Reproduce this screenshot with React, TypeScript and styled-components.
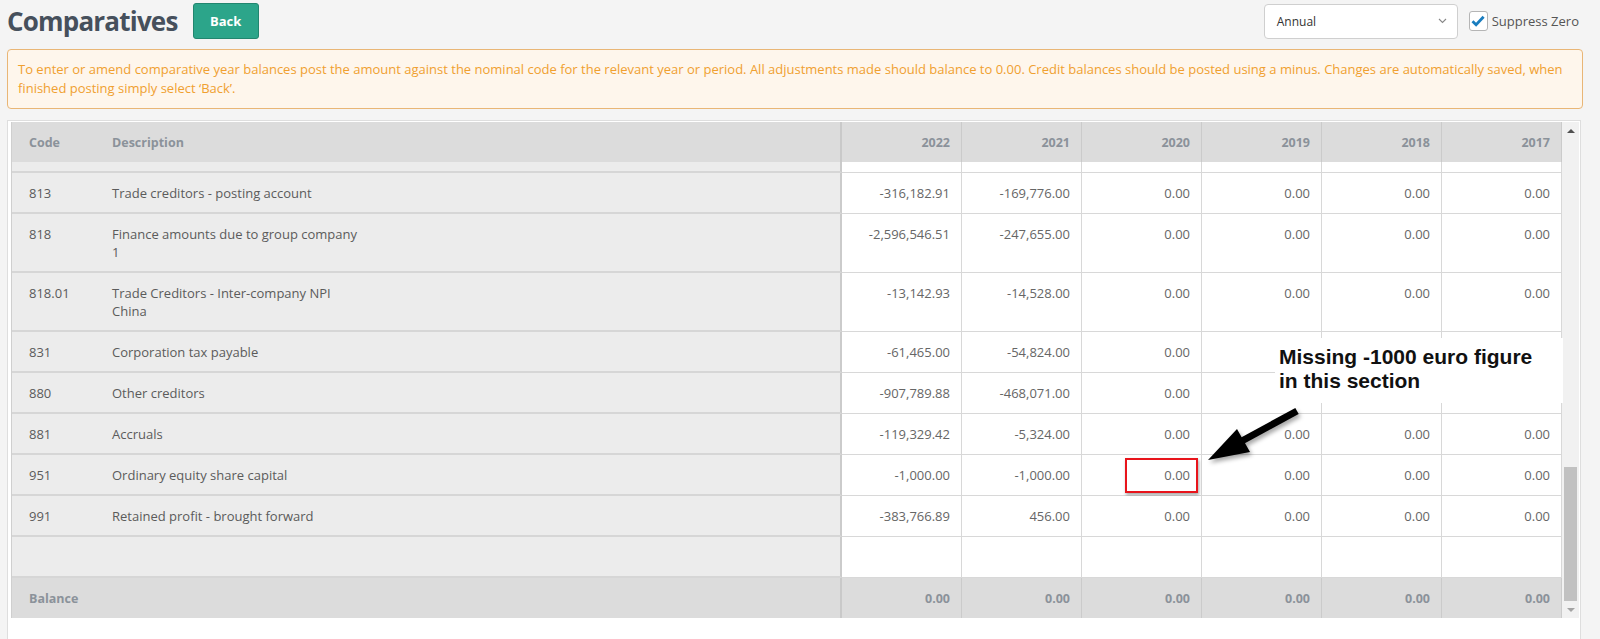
import styled, { createGlobalStyle } from "styled-components";

const GlobalStyle = createGlobalStyle`
    body {
        margin: 0;
        background: #f4f4f4;
        font-family: "Open Sans", "Noto Sans", sans-serif;
    }
`;

interface Line {
    code: string;
    description: string;
    values: string[];
}

const YEARS = ["2022", "2021", "2020", "2019", "2018", "2017"];

// cells under the annotation box are left blank: they are covered in the screenshot
const ROWS: Line[] = [
    { code: "813", description: "Trade creditors - posting account", values: ["-316,182.91", "-169,776.00", "0.00", "0.00", "0.00", "0.00"] },
    { code: "818", description: "Finance amounts due to group company 1", values: ["-2,596,546.51", "-247,655.00", "0.00", "0.00", "0.00", "0.00"] },
    { code: "818.01", description: "Trade Creditors - Inter-company NPI China", values: ["-13,142.93", "-14,528.00", "0.00", "0.00", "0.00", "0.00"] },
    { code: "831", description: "Corporation tax payable", values: ["-61,465.00", "-54,824.00", "0.00", "", "", ""] },
    { code: "880", description: "Other creditors", values: ["-907,789.88", "-468,071.00", "0.00", "", "", ""] },
    { code: "881", description: "Accruals", values: ["-119,329.42", "-5,324.00", "0.00", "0.00", "0.00", "0.00"] },
    { code: "951", description: "Ordinary equity share capital", values: ["-1,000.00", "-1,000.00", "0.00", "0.00", "0.00", "0.00"] },
    { code: "991", description: "Retained profit - brought forward", values: ["-383,766.89", "456.00", "0.00", "0.00", "0.00", "0.00"] },
];

const Page = styled.div`
    padding: 3px 17px 0 7px;
`;

const TopBar = styled.div`
    display: flex;
    justify-content: space-between;
    align-items: center;
    height: 36px;
`;

const TitleGroup = styled.div`
    display: flex;
    align-items: center;
`;

const Title = styled.h1`
    margin: 0;
    font-size: 26px;
    line-height: 36px;
    font-weight: 700;
    letter-spacing: -0.8px;
    color: #46505c;
`;

const BackButton = styled.button`
    margin-left: 15px;
    width: 66px;
    height: 36px;
    background: #2ca58a;
    border: 1px solid #22866f;
    border-radius: 3px;
    color: #fff;
    font-family: "Open Sans", sans-serif;
    font-weight: 700;
    font-size: 13px;
`;

const Controls = styled.div`
    display: flex;
    align-items: center;
    margin-right: 4px;
`;

const Select = styled.div`
    width: 194px;
    height: 35px;
    box-sizing: border-box;
    background: #fff;
    border: 1px solid #cfcfcf;
    border-radius: 4px;
    padding: 0 10px 0 12px;
    display: flex;
    align-items: center;
    justify-content: space-between;
    font-size: 12px;
    color: #333;
`;

const CheckLabel = styled.label`
    display: flex;
    align-items: center;
    margin-left: 11px;
    font-size: 13px;
    color: #555;
`;

const CheckBox = styled.span`
    width: 19px;
    height: 20px;
    box-sizing: border-box;
    border: 1px solid #b5b5b5;
    border-radius: 3px;
    background: #fff;
    display: flex;
    align-items: center;
    justify-content: center;
    margin-right: 4px;
`;

const Notice = styled.div`
    margin-top: 10px;
    background: #fef6ec;
    border: 1px solid #e9b676;
    border-radius: 4px;
    padding: 10px 10px;
    font-size: 13px;
    line-height: 19px;
    color: #f0a030;
`;

const Panel = styled.div`
    margin: 11px 2px 0 0;
    background: #fff;
    border: 1px solid #dedede;
    padding: 1px 1px 40px 3px;
    display: flex;
`;

const TableArea = styled.div`
    flex: 1;
    position: relative;
    border-left: 1px solid #cfcfcf;
`;

const Row = styled.div`
    display: grid;
    grid-template-columns: 88px 1fr repeat(6, 120px);
`;

const HeadCell = styled.div<{ $num?: boolean; $divider?: boolean }>`
    height: 40px;
    box-sizing: border-box;
    background: #dcdcdc;
    display: flex;
    align-items: center;
    justify-content: ${(p) => (p.$num ? "flex-end" : "flex-start")};
    padding: ${(p) => (p.$num ? "0 11px" : "0 12px 0 17px")};
    font-size: 12.5px;
    font-weight: 700;
    color: #8b929a;
    border-right: ${(p) => (p.$divider ? "2px solid #c9c9c9" : p.$num ? "1px solid #cbcbcb" : "none")};
    &:nth-child(2) {
        padding-left: 12px;
    }
`;

const LeftCell = styled.div<{ $divider?: boolean; $code?: boolean }>`
    background: #ececec;
    border-bottom: 2px solid #d6d6d6;
    border-right: ${(p) => (p.$divider ? "2px solid #cbcbcb" : "none")};
    padding: ${(p) => (p.$code ? "11px 6px 10px 17px" : "11px 12px 10px 12px")};
    font-size: 13px;
    line-height: 18px;
    color: #5b5b5b;
    min-height: 18px;
`;

const Desc = styled.span`
    display: block;
    max-width: 252px;
`;

const NumCell = styled.div`
    position: relative;
    background: #fff;
    border-right: 1px solid #d8d8d8;
    border-bottom: 1px solid #d8d8d8;
    padding: 11px 11px 11px;
    text-align: right;
    font-size: 13px;
    line-height: 18px;
    color: #666;
`;

const SpacerLeft = styled.div<{ $divider?: boolean }>`
    height: 9px;
    background: #ececec;
    border-bottom: 2px solid #d6d6d6;
    border-right: ${(p) => (p.$divider ? "2px solid #cbcbcb" : "none")};
`;

const SpacerNum = styled.div`
    height: 10px;
    background: #fff;
    border-right: 1px solid #d8d8d8;
    border-bottom: 1px solid #d8d8d8;
`;

const TotalCell = styled(HeadCell)`
    color: #8b929a;
`;

const Highlight = styled.span`
    position: absolute;
    top: 3px;
    bottom: 2px;
    right: 3px;
    width: 73px;
    box-sizing: border-box;
    border: 2px solid #e8141b;
    box-shadow: 1px 2px 3px rgba(0, 0, 0, 0.35);
`;

const Note = styled.div`
    position: absolute;
    left: 1263px;
    top: 216px;
    width: 288px;
    height: 65px;
    box-sizing: border-box;
    padding: 7px 0 0 4px;
    background: #fff;
    font-family: "Liberation Sans", Arial, sans-serif;
    font-weight: 700;
    font-size: 21px;
    line-height: 24px;
    color: #111;
`;

const Arrow = styled.svg`
    position: absolute;
    left: 1188px;
    top: 279px;
`;

const Scrollbar = styled.div`
    width: 17px;
    background: #f1f1f1;
    display: flex;
    flex-direction: column;
`;

const ScrollButton = styled.div<{ $down?: boolean }>`
    height: 17px;
    display: flex;
    align-items: center;
    justify-content: center;
    &::after {
        content: "";
        border-left: 4px solid transparent;
        border-right: 4px solid transparent;
        ${(p) => (p.$down ? "border-top: 4px solid #a3a3a3;" : "border-bottom: 4px solid #505050;")}
    }
`;

const Track = styled.div`
    flex: 1;
    display: flex;
    flex-direction: column;
    justify-content: flex-end;
`;

const Thumb = styled.div`
    height: 134px;
    margin: 0 2px;
    background: #c1c1c1;
`;

export default function App() {
    return (
        <Page>
            <GlobalStyle />
            <TopBar>
                <TitleGroup>
                    <Title>Comparatives</Title>
                    <BackButton>Back</BackButton>
                </TitleGroup>
                <Controls>
                    <Select>
                        <span>Annual</span>
                        <svg width="9" height="6" viewBox="0 0 9 6">
                            <path d="M1 1l3.5 3.5L8 1" fill="none" stroke="#888" strokeWidth="1.1" />
                        </svg>
                    </Select>
                    <CheckLabel>
                        <CheckBox>
                            <svg width="14" height="12" viewBox="0 0 14 12">
                                <path d="M1.5 6.2l3.6 3.6L12.6 1.8" fill="none" stroke="#1a7dbf" strokeWidth="2.8" />
                            </svg>
                        </CheckBox>
                        Suppress Zero
                    </CheckLabel>
                </Controls>
            </TopBar>
            <Notice>
                To enter or amend comparative year balances post the amount against the nominal code for the relevant year or period. All
                adjustments made should balance to 0.00. Credit balances should be posted using a minus. Changes are automatically saved, when
                finished posting simply select ‘Back’.
            </Notice>
            <Panel>
                <TableArea>
                    <Row>
                        <HeadCell>Code</HeadCell>
                        <HeadCell $divider>Description</HeadCell>
                        {YEARS.map((y) => (
                            <HeadCell key={y} $num>
                                {y}
                            </HeadCell>
                        ))}
                    </Row>
                    <Row>
                        <SpacerLeft />
                        <SpacerLeft $divider />
                        {YEARS.map((y) => (
                            <SpacerNum key={y} />
                        ))}
                    </Row>
                    {ROWS.map((r) => (
                        <Row key={r.code}>
                            <LeftCell $code>{r.code}</LeftCell>
                            <LeftCell $divider>
                                <Desc>{r.description}</Desc>
                            </LeftCell>
                            {r.values.map((v, i) => (
                                <NumCell key={i}>
                                    {v}
                                    {r.code === "951" && i === 2 && <Highlight />}
                                </NumCell>
                            ))}
                        </Row>
                    ))}
                    <Row>
                        <LeftCell $code />
                        <LeftCell $divider />
                        {YEARS.map((y) => (
                            <NumCell key={y} />
                        ))}
                    </Row>
                    <Row>
                        <TotalCell>Balance</TotalCell>
                        <TotalCell $divider />
                        {YEARS.map((y) => (
                            <TotalCell key={y} $num>
                                0.00
                            </TotalCell>
                        ))}
                    </Row>
                    <Note>
                        Missing -1000 euro figure
                        <br />
                        in this section
                    </Note>
                    <Arrow width="110" height="70" viewBox="1200 400 110 70">
                        <defs>
                            <filter id="shadow" x="-20%" y="-20%" width="140%" height="140%">
                                <feDropShadow dx="2" dy="3" stdDeviation="2" floodColor="#000" floodOpacity="0.35" />
                            </filter>
                        </defs>
                        <g filter="url(#shadow)">
                            <line x1="1297" y1="410" x2="1240" y2="441" stroke="#000" strokeWidth="7" />
                            <polygon points="1208,459 1250,451 1237,428" fill="#000" />
                        </g>
                    </Arrow>
                </TableArea>
                <Scrollbar>
                    <ScrollButton />
                    <Track>
                        <Thumb />
                    </Track>
                    <ScrollButton $down />
                </Scrollbar>
            </Panel>
        </Page>
    );
}
